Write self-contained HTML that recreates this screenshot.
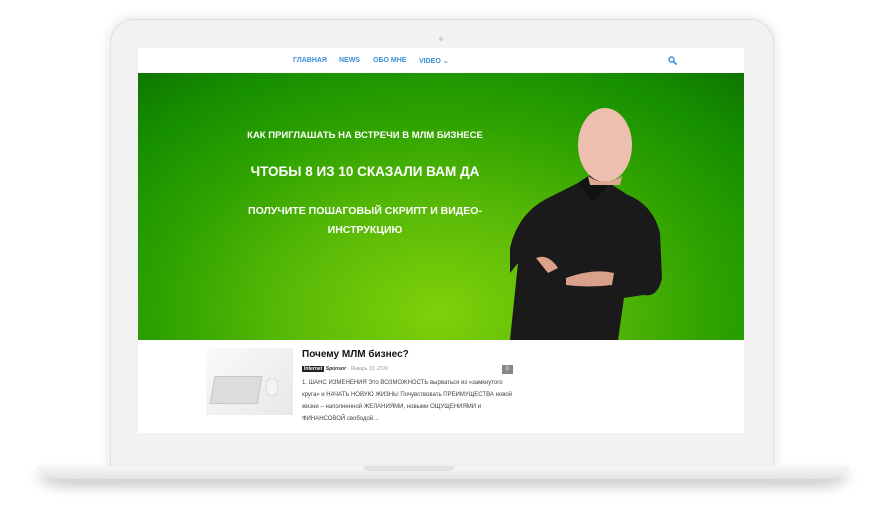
<!DOCTYPE html>
<html><head><meta charset="utf-8"><style>
*{margin:0;padding:0;box-sizing:border-box}
body{width:886px;height:521px;background:#fff;position:relative;overflow:hidden;font-family:"Liberation Sans",sans-serif}
.abs{position:absolute}
.bezel{left:110px;top:19px;width:664px;height:452px;background:#f2f2f2;border:1px solid #e0e0e0;border-radius:24px 24px 0 0;box-shadow:0 0 12px rgba(0,0,0,.12)}
.screen{left:138px;top:48px;width:606px;height:385px;background:#fff}
.nav{left:0;top:0;width:606px;height:25px;font-size:7px;font-weight:bold;color:#3a8fd8}
.hero{left:0;top:25px;width:606px;height:267px;overflow:hidden;background:radial-gradient(ellipse 460px 320px at 300px 240px,#7fd10a 0%,#56b806 35%,#2fa200 60%,#179000 82%,#0e7500 100%)}
.ht{color:#fff;font-weight:bold;text-align:center;position:absolute;width:270px;left:92px}
.base{left:37px;top:466px;width:813px;height:13px;background:linear-gradient(#f7f7f7,#e4e4e4);border-radius:0 0 40px 40px / 0 0 12px 12px;box-shadow:0 8px 12px rgba(0,0,0,.22)}
</style></head><body>
<div class="abs bezel"></div>
<div class="abs" style="left:439px;top:37px;width:4px;height:4px;border-radius:50%;background:#ccc"></div>
<div class="abs screen">
 <div class="abs nav">
  <span class="abs" style="left:155px;top:9px">ГЛАВНАЯ</span>
  <span class="abs" style="left:201px;top:9px">NEWS</span>
  <span class="abs" style="left:235px;top:9px">ОБО МНЕ</span>
  <span class="abs" style="left:281px;top:9px">VIDEO <span style="color:#999">⌄</span></span>
  <svg class="abs" style="left:530px;top:8px" width="9" height="9" viewBox="0 0 9 9"><circle cx="3.5" cy="3.5" r="2.5" stroke="#3a8fd8" stroke-width="1.4" fill="none"/><path d="M5.5 5.5L8.5 8.5" stroke="#3a8fd8" stroke-width="1.8"/></svg>
 </div>
 <div class="abs hero">
  <div class="ht" style="top:57px;font-size:9.5px">КАК ПРИГЛАШАТЬ НА ВСТРЕЧИ В МЛМ БИЗНЕСЕ</div>
  <div class="ht" style="top:91px;font-size:13.5px">ЧТОБЫ 8 ИЗ 10 СКАЗАЛИ ВАМ ДА</div>
  <div class="ht" style="top:129px;font-size:10.5px;line-height:19px">ПОЛУЧИТЕ ПОШАГОВЫЙ СКРИПТ И ВИДЕО-ИНСТРУКЦИЮ</div>
  <svg class="abs" style="left:0;top:0" width="606" height="267" viewBox="0 0 606 267">
   <path d="M372 267 L380 190 L372 200 L372 175 Q380 140 410 125 L440 110 L468 108 L490 122 Q515 132 522 160 L524 205 Q520 225 505 222 L486 225 L480 267 Z" fill="#1a1a1a"/>
   <path d="M440 110 L455 100 L470 100 L468 115 L455 128 Z" fill="#111"/>
   <path d="M398 185 Q410 180 420 195 L410 200 Z" fill="#d9a08a"/>
   <path d="M428 205 Q455 195 476 200 L474 212 Q450 215 428 212 Z" fill="#d9a08a"/>
   <ellipse cx="467" cy="72" rx="27" ry="37" fill="#ecbfae"/>
   <path d="M450 103 Q467 115 484 103 L482 112 L452 112 Z" fill="#dfa892"/>
  </svg>
 </div>
 <div class="abs" style="left:68px;top:300px;width:87px;height:67px;background:linear-gradient(135deg,#fafafa,#e8e8e8)">
  <div class="abs" style="left:6px;top:28px;width:48px;height:28px;background:#dcdcdc;border:1px solid #c8c8c8;transform:skewX(-10deg)"></div>
  <div class="abs" style="left:60px;top:30px;width:12px;height:18px;border-radius:6px;background:#f4f4f4;border:1px solid #ddd"></div>
 </div>
 <div class="abs" style="left:164px;top:301px;font-size:10px;font-weight:bold;color:#111">Почему МЛМ бизнес?</div>
 <div class="abs" style="left:164px;top:318px;font-size:5px;color:#999"><span style="background:#222;color:#fff;padding:0 2px;font-weight:bold">Internet</span> <b style="color:#333;font-style:italic">Sponsor</b> - <i>Январь 19, 2016</i></div>
 <div class="abs" style="left:364px;top:317px;width:11px;height:9px;background:#888;color:#fff;font-size:5px;text-align:center;line-height:9px">0</div>
 <div class="abs" style="left:164px;top:329px;width:214px;font-size:6px;line-height:12px;color:#444">1. ШАНС ИЗМЕНЕНИЯ Это ВОЗМОЖНОСТЬ вырваться из «замкнутого круга» и НАЧАТЬ НОВУЮ ЖИЗНЬ! Почувствовать ПРЕИМУЩЕСТВА новой жизни – наполненной ЖЕЛАНИЯМИ, новыми ОЩУЩЕНИЯМИ и ФИНАНСОВОЙ свободой…</div>
</div>
<div class="abs base"></div>
<div class="abs" style="left:363px;top:466px;width:92px;height:5px;background:#e2e2e2;border-radius:0 0 5px 5px"></div>
</body></html>
